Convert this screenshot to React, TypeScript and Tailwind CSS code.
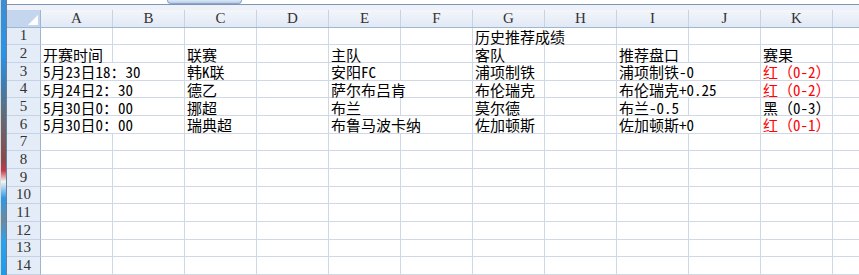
const FONT = {
  fontFamily: '"Noto Sans Mono CJK SC", "Noto Sans CJK SC", monospace',
};

const HEAD_FONT = {
  fontFamily: '"Liberation Serif", "Noto Sans CJK SC", serif',
};

const COLS = ["A", "B", "C", "D", "E", "F", "G", "H", "I", "J", "K"];

type Cell = { t: string; span?: boolean; red?: boolean };

// column index -> cell
const DATA: Record<number, Record<number, Cell>> = {
  1: { 6: { t: "历史推荐成绩", span: true } },
  2: {
    0: { t: "开赛时间" },
    2: { t: "联赛" },
    4: { t: "主队" },
    6: { t: "客队" },
    8: { t: "推荐盘口" },
    10: { t: "赛果" },
  },
  3: {
    0: { t: "5月23日18：30", span: true },
    2: { t: "韩K联" },
    4: { t: "安阳FC" },
    6: { t: "浦项制铁" },
    8: { t: "浦项制铁-0", span: true },
    10: { t: "红（0-2）", red: true },
  },
  4: {
    0: { t: "5月24日2：30", span: true },
    2: { t: "德乙" },
    4: { t: "萨尔布吕肯", span: true },
    6: { t: "布伦瑞克" },
    8: { t: "布伦瑞克+0.25", span: true },
    10: { t: "红（0-2）", red: true },
  },
  5: {
    0: { t: "5月30日0：00", span: true },
    2: { t: "挪超" },
    4: { t: "布兰" },
    6: { t: "莫尔德" },
    8: { t: "布兰-0.5" },
    10: { t: "黑（0-3）" },
  },
  6: {
    0: { t: "5月30日0：00", span: true },
    2: { t: "瑞典超" },
    4: { t: "布鲁马波卡纳", span: true },
    6: { t: "佐加顿斯" },
    8: { t: "佐加顿斯+0", span: true },
    10: { t: "红（0-1）", red: true },
  },
};

function Row({ n }: { n: number }) {
  const cells = DATA[n] || {};
  const out = [];
  for (let c = 0; c < 11; c++) {
    const cell = cells[c];
    if (cell) {
      out.push(
        <div
          key={c}
          className={`flex items-center whitespace-nowrap border-b border-r border-[#d0d7e5] pl-[2px] pt-[1px] text-[15px] leading-[15px] ${
            cell.span ? "col-span-2" : ""
          } ${cell.red ? "text-[#ff0000]" : "text-black"}`}
        >
          {cell.t}
        </div>
      );
      if (cell.span) c++;
    } else {
      out.push(<div key={c} className="border-b border-r border-[#d0d7e5]" />);
    }
  }
  return (
    <div className="grid h-[18px] grid-cols-[34px_repeat(11,72px)_1fr]">
      <div
        className="flex items-center justify-center border-b border-r border-b-[#c5d3e4] border-r-[#9eb6ce] bg-[#e4ecf7] text-[15px] leading-[15px] text-[#333]"
        style={HEAD_FONT}
      >
        {n}
      </div>
      {out}
      <div className="border-b border-[#d0d7e5]" />
    </div>
  );
}

export default function App() {
  return (
    <div className="flex h-[275px] w-[859px] overflow-hidden bg-white" style={FONT}>
      <div className="w-[7px] shrink-0 border-l border-r border-l-[#d8d8d8] border-r-[#6a7f99] bg-[linear-gradient(to_bottom,#3a8fd8_0%,#2a93e6_20%,#3a7fb8_30%,#5c6f7e_40%,#8a4a4a_58%,#c43a4a_62%,#f4f4f4_66%,#2a9ae8_72%,#6a8aa0_80%,#2aa2ec_88%,#1d9be8_100%)]" />
      <div className="flex min-w-0 flex-1 flex-col">
        <div className="flex h-[4px] bg-white">
          <div className="ml-[160px] h-[4px] w-[75px] rounded-b-[6px] border border-t-0 border-[#8aa6c8] bg-[linear-gradient(to_bottom,#dbe7f6,#b8cde9)]" />
        </div>
        <div className="h-[6px] border-t border-[#7d96b5] bg-[#eef2f8]" />
        <div className="grid h-[18px] grid-cols-[34px_repeat(11,72px)_1fr] border-b border-[#9eb6ce] bg-[linear-gradient(to_bottom,#f3f6fb,#e1e9f5)]">
          <div className="relative border-r border-[#9eb6ce] bg-[#c4d6ee]">
            <div className="absolute bottom-[2px] right-[2px] h-0 w-0 border-b-[10px] border-l-[10px] border-b-white border-l-transparent" />
          </div>
          {COLS.map((c) => (
            <div
              key={c}
              className="flex items-center justify-center border-r border-[#c5d3e4] text-[15px] leading-[15px] text-[#333]"
              style={HEAD_FONT}
            >
              {c}
            </div>
          ))}
          <div />
        </div>
        {Array.from({ length: 14 }, (_, i) => (
          <Row key={i} n={i + 1} />
        ))}
      </div>
    </div>
  );
}
